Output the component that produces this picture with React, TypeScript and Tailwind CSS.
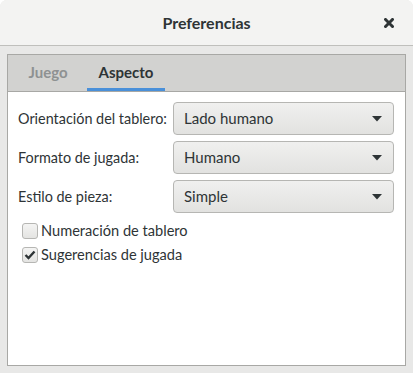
import React from 'react'

const font = { fontFamily: 'Lato, "DejaVu Sans", sans-serif' }

const Combo: React.FC<{ value: string }> = ({ value }) => (
  <div className="flex h-[33px] w-[221px] items-center justify-between rounded-[4px] border border-[#b6b6b3] bg-gradient-to-b from-[#f0f0ef] to-[#e2e2e0] pl-[10px] pr-[11px] text-[15px] text-[#2e3436] shadow-[0_1px_0_rgba(255,255,255,0.8)]">
    <span>{value}</span>
    <svg width="10" height="6" viewBox="0 0 10 6">
      <path d="M0 0 H10 L5 5.5 Z" fill="#2e3436" />
    </svg>
  </div>
)

const Check: React.FC<{ label: string; checked?: boolean }> = ({ label, checked }) => (
  <div className="flex h-6 items-center gap-[3px]">
    <div className="flex h-[16px] w-[16px] items-center justify-center rounded-[3px] border border-[#b6b6b3] bg-gradient-to-b from-[#f4f4f3] to-[#e4e4e2]">
      {checked && (
        <svg width="12" height="10" viewBox="0 0 12 10">
          <path d="M1.5 5 L4.5 8 L10.5 1.5" stroke="#2e3436" strokeWidth="2.4" fill="none" />
        </svg>
      )}
    </div>
    <span className="text-[14.6px] text-[#2e3436]">{label}</span>
  </div>
)

const rows = [
  { label: 'Orientación del tablero:', value: 'Lado humano' },
  { label: 'Formato de jugada:', value: 'Humano' },
  { label: 'Estilo de pieza:', value: 'Simple' },
]

export default function App() {
  return (
    <div style={font} className="flex h-[373px] w-[413px] flex-col overflow-hidden rounded-t-[7px] bg-[#e8e8e7]">
      <div className="relative flex h-[46px] shrink-0 items-center justify-center border-b border-[#bfbfbc] bg-[#f3f3f2]">
        <span className="text-[16px] font-bold text-[#2e3436]">Preferencias</span>
        <svg className="absolute right-[19px] top-[18px]" width="10" height="10" viewBox="0 0 10 10">
          <path d="M1.5 1.5 L8.5 8.5 M8.5 1.5 L1.5 8.5" stroke="#2e3436" strokeWidth="3" strokeLinecap="square" />
        </svg>
      </div>
      <div className="flex-1 px-[7px] pt-[8px] pb-[7px]">
        <div className="flex h-full flex-col border border-[#a8a8a5] bg-white">
          <div className="flex h-[37px] shrink-0 items-end border-b border-[#a8a8a5] bg-[#d2d2d0] pl-[1px]">
            <div className="flex h-full w-[78px] items-center justify-center pb-[2px] text-[15px] font-bold text-[#8e9192]">
              Juego
            </div>
            <div className="flex h-full w-[78px] items-center justify-center border-b-[3px] border-[#4a90d9] pt-[1px] text-[15px] font-bold text-[#2e3436]">
              Aspecto
            </div>
          </div>
          <div className="flex flex-col px-[10px] pt-[10px]">
            <div className="flex flex-col gap-[6px]">
              {rows.map((r) => (
                <div key={r.label} className="flex items-center">
                  <span className="w-[155px] whitespace-nowrap text-[14.4px] text-[#2e3436]">{r.label}</span>
                  <Combo value={r.value} />
                </div>
              ))}
            </div>
            <div className="mt-[6px] flex flex-col pl-[4px]">
              <Check label="Numeración de tablero" />
              <Check label="Sugerencias de jugada" checked />
            </div>
          </div>
        </div>
      </div>
    </div>
  )
}
